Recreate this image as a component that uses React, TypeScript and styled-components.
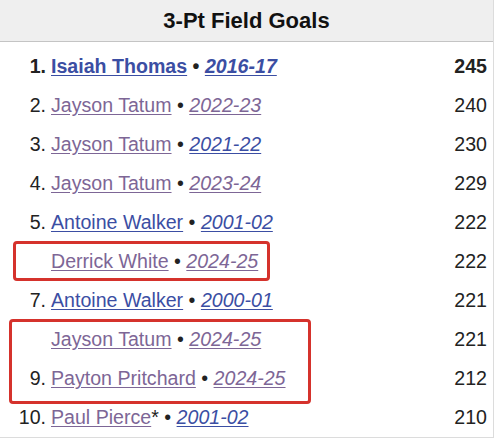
import styled, { createGlobalStyle } from 'styled-components'

const GlobalStyle = createGlobalStyle`
  body {
    margin: 0;
    background: #fff;
    font-family: "Liberation Sans", Arial, sans-serif;
  }
`

// ==================== 样式 ====================

const Card = styled.div`
  position: relative;
  width: 493px;
  border-right: 1px solid #dcdcdc;
  border-bottom: 1px solid #dcdcdc;
  background: #fff;
`

const Header = styled.div`
  height: 41px;
  background: #efefef;
  border-bottom: 1px solid #c4c4c4;
  display: flex;
  align-items: center;
  justify-content: center;
  font-size: 22px;
  font-weight: bold;
  color: #111;
`

const List = styled.ol`
  list-style: none;
  margin: 0;
  padding: 5px 0 0;
`

const Row = styled.li<{ $top?: boolean }>`
  height: 39px;
  display: flex;
  align-items: center;
  justify-content: space-between;
  padding-right: 6px;
  font-size: 19.6px;
  color: #222;
  font-weight: ${p => (p.$top ? 'bold' : 'normal')};
`

const Entry = styled.div`
  display: flex;
  align-items: baseline;
  white-space: pre;
`

const Rank = styled.span`
  width: 46px;
  text-align: right;
  margin-right: 5px;
`

const Link = styled.a<{ $visited?: boolean; $italic?: boolean }>`
  color: ${p => (p.$visited ? '#7d6696' : '#3b4ea3')};
  font-style: ${p => (p.$italic ? 'italic' : 'normal')};
  text-decoration: underline;
  text-underline-offset: 2px;
  cursor: pointer;
`

const Value = styled.span`
  text-align: right;
`

const Highlight = styled.div`
  position: absolute;
  box-sizing: border-box;
  border: 3px solid #d5322c;
  border-radius: 4px;
  pointer-events: none;
`

// ==================== 数据 ====================

interface Record {
  rank?: string
  name: string
  nameVisited: boolean
  star?: boolean
  season: string
  seasonVisited: boolean
  value: number
}

const records: Record[] = [
  { rank: '1.', name: 'Isaiah Thomas', nameVisited: false, season: '2016-17', seasonVisited: false, value: 245 },
  { rank: '2.', name: 'Jayson Tatum', nameVisited: true, season: '2022-23', seasonVisited: true, value: 240 },
  { rank: '3.', name: 'Jayson Tatum', nameVisited: true, season: '2021-22', seasonVisited: false, value: 230 },
  { rank: '4.', name: 'Jayson Tatum', nameVisited: true, season: '2023-24', seasonVisited: true, value: 229 },
  { rank: '5.', name: 'Antoine Walker', nameVisited: false, season: '2001-02', seasonVisited: false, value: 222 },
  { name: 'Derrick White', nameVisited: true, season: '2024-25', seasonVisited: true, value: 222 },
  { rank: '7.', name: 'Antoine Walker', nameVisited: false, season: '2000-01', seasonVisited: false, value: 221 },
  { name: 'Jayson Tatum', nameVisited: true, season: '2024-25', seasonVisited: true, value: 221 },
  { rank: '9.', name: 'Payton Pritchard', nameVisited: true, season: '2024-25', seasonVisited: true, value: 212 },
  { rank: '10.', name: 'Paul Pierce', nameVisited: true, star: true, season: '2001-02', seasonVisited: false, value: 210 },
]

// ==================== 组件 ====================

export default function App() {
  return (
    <>
      <GlobalStyle />
      <Card>
        <Header>3-Pt Field Goals</Header>
        <List>
          {records.map((r, i) => (
            <Row key={i} $top={i === 0}>
              <Entry>
                <Rank>{r.rank ?? ''}</Rank>
                <Link $visited={r.nameVisited}>{r.name}</Link>
                {r.star && '*'}
                {' • '}
                <Link $visited={r.seasonVisited} $italic>{r.season}</Link>
              </Entry>
              <Value>{r.value}</Value>
            </Row>
          ))}
        </List>
        {/* 标注框 */}
        <Highlight style={{ left: 13, top: 241, width: 257, height: 40 }} />
        <Highlight style={{ left: 9, top: 319, width: 302, height: 85 }} />
      </Card>
    </>
  )
}
